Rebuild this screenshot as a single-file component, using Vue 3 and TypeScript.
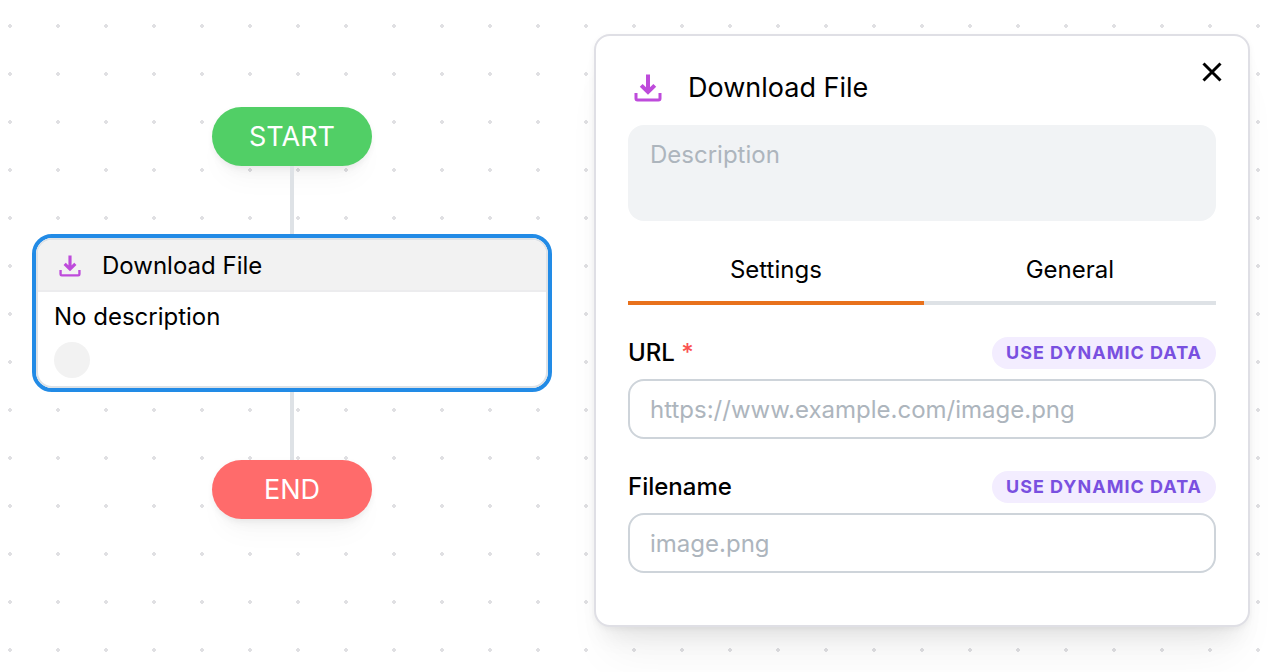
<script setup lang="ts">
import { ref } from 'vue'

type TabId = 'settings' | 'general'

interface Field {
  id: string
  label: string
  placeholder: string
  required: boolean
}

const tabs: { id: TabId; label: string }[] = [
  { id: 'settings', label: 'Settings' },
  { id: 'general', label: 'General' },
]

const fields: Field[] = [
  { id: 'url', label: 'URL', placeholder: 'https://www.example.com/image.png', required: true },
  { id: 'filename', label: 'Filename', placeholder: 'image.png', required: false },
]

const activeTab = ref<TabId>('settings')
const description = ref('')
const values = ref<Record<string, string>>({ url: '', filename: '' })
</script>

<template>
  <main class="canvas">
    <section class="flow" aria-label="Workflow">
      <div class="terminal start">START</div>
      <div class="edge"></div>
      <article class="node">
        <div class="node-inner">
          <header class="node-header">
            <svg class="node-icon" viewBox="0 0 28 28" aria-hidden="true">
              <path class="arrow" d="M14 0.500V18M7.200 11.300 14 18 20.800 11.300" />
              <path class="tray" d="M2 19V24.500Q2 26 3.500 26H24.500Q26 26 26 24.500V19" />
            </svg>
            <span>Download File</span>
          </header>
          <div class="node-body">
            <p>No description</p>
            <span class="dot"></span>
          </div>
        </div>
      </article>
      <div class="edge"></div>
      <div class="terminal end">END</div>
    </section>

    <aside class="panel" aria-label="Action settings">
      <button class="close" type="button" aria-label="Close">
        <svg viewBox="0 0 20 20" aria-hidden="true">
          <path d="M1.500 1.500 18.500 18.500M18.500 1.500 1.500 18.500" />
        </svg>
      </button>
      <header class="panel-header">
        <span class="icon-box">
          <svg class="panel-icon" viewBox="0 0 28 28" aria-hidden="true">
            <path class="arrow" d="M14 0.500V18M7.200 11.300 14 18 20.800 11.300" />
            <path class="tray" d="M2 19V24.500Q2 26 3.500 26H24.500Q26 26 26 24.500V19" />
          </svg>
        </span>
        <h1>Download File</h1>
      </header>
      <textarea v-model="description" class="description" placeholder="Description" aria-label="Description"></textarea>
      <div class="tabs" role="tablist">
        <button
          v-for="tab in tabs"
          :key="tab.id"
          type="button"
          role="tab"
          class="tab"
          :class="{ active: tab.id === activeTab }"
          :aria-selected="tab.id === activeTab"
          @click="activeTab = tab.id"
        >{{ tab.label }}</button>
      </div>
      <form class="fields" @submit.prevent>
        <div v-for="field in fields" :key="field.id" class="field">
          <div class="field-head">
            <label :for="field.id">{{ field.label }}<span v-if="field.required" class="required"> *</span></label>
            <button class="badge" type="button">USE DYNAMIC DATA</button>
          </div>
          <input :id="field.id" v-model="values[field.id]" type="text" :placeholder="field.placeholder" />
        </div>
      </form>
    </aside>
  </main>
</template>

<style>
body {
  margin: 0;
}
</style>

<style scoped>
.canvas,
.canvas * {
  box-sizing: border-box;
}

.canvas {
  display: flex;
  align-items: flex-start;
  gap: 42px;
  min-height: 100vh;
  padding: 34px 30px 44px 32px;
  background-color: #fff;
  background-image: radial-gradient(circle at 10px 26px, #e0e0e3 1px, #e0e0e3 2px, transparent 2px);
  background-size: 48px 48px;
  color: #000;
  font-family: Inter, "Liberation Sans", sans-serif;
  font-size: 24px;
  line-height: 32px;
}

button,
input,
textarea {
  font: inherit;
  color: inherit;
}

.flow {
  display: flex;
  flex: 0 1 520px;
  flex-direction: column;
  align-items: center;
  padding-top: 73px;
}

.terminal {
  width: 160px;
  padding: 14px 0 13px;
  border-radius: 32px;
  color: #fff;
  font-size: 27px;
  text-align: center;
  box-shadow: 0 2px 6px rgba(0, 0, 0, 0.05), 0 20px 30px -10px rgba(0, 0, 0, 0.04), 0 10px 14px -6px rgba(0, 0, 0, 0.04);
}

.start {
  background: #51cf66;
}

.end {
  background: #ff6b6b;
}

.edge {
  width: 4px;
  height: 68px;
  background: #dee2e6;
}

.node {
  width: 100%;
  border: 4px solid #228be6;
  border-radius: 20px;
  background: #fff;
}

.node-inner {
  overflow: hidden;
  border: 2px solid #dee2e6;
  border-radius: 16px;
}

.node-header {
  display: flex;
  align-items: center;
  gap: 21px;
  padding: 10px 21px 8px;
  border-bottom: 2px solid #ececee;
  background: #f2f2f2;
}

svg {
  display: block;
  fill: none;
  stroke: #be4bdb;
  stroke-width: 3;
}

.arrow {
  stroke-width: 4;
}

.tray {
  stroke-width: 3;
}

.node-icon {
  width: 22px;
  height: 22px;
}

.node-body {
  padding: 9px 16px 8px;
}

.node-body p {
  margin: 0 0 9px;
}

.dot {
  display: block;
  width: 36px;
  height: 36px;
  border-radius: 50%;
  background: #f2f2f2;
}

.panel {
  position: relative;
  flex: 1 1 0;
  min-width: 0;
  padding: 32px 32px 52px;
  border: 2px solid #dfdfe5;
  border-radius: 16px;
  background: #fff;
  box-shadow: 0 2px 6px rgba(0, 0, 0, 0.05), 0 40px 46px -14px rgba(0, 0, 0, 0.05), 0 18px 24px -10px rgba(0, 0, 0, 0.08);
}

.close {
  position: absolute;
  top: 20px;
  right: 20px;
  padding: 6px;
  border: 0;
  background: none;
}

.close svg {
  width: 20px;
  height: 20px;
  stroke: #000;
}

.panel-header {
  display: flex;
  align-items: center;
  gap: 20px;
  margin-bottom: 17px;
}

.icon-box {
  display: grid;
  place-items: center;
  width: 40px;
  height: 40px;
}

.panel-icon {
  width: 28px;
  height: 28px;
}

h1 {
  margin: 0;
  font-size: 27px;
  font-weight: 400;
}

.description {
  display: block;
  width: 100%;
  height: 96px;
  padding: 14px 22px;
  border: 0;
  border-radius: 16px;
  background: #f1f3f5;
  resize: none;
}

.description::placeholder,
input::placeholder {
  color: #adb5bd;
  opacity: 1;
}

.tabs {
  display: flex;
  margin: 16px 0 32px;
}

.tab {
  flex: 1 1 auto;
  padding: 17px 32px 15px;
  border: 0;
  border-bottom: 4px solid #dee2e6;
  background: none;
}

.tab.active {
  border-bottom-color: #e8711c;
}

.fields {
  display: grid;
  gap: 32px;
}

.field {
  display: grid;
  gap: 10px;
}

.field-head {
  display: flex;
  align-items: center;
  justify-content: space-between;
}

label {
  font-weight: 500;
}

.required {
  color: #fa5252;
}

.badge {
  padding: 0 14px;
  border: 0;
  border-radius: 16px;
  background: #f3edff;
  color: #7950e0;
  font-size: 18px;
  font-weight: 700;
  letter-spacing: 1px;
}

input {
  width: 100%;
  height: 60px;
  padding: 0 20px;
  border: 2px solid #ced4da;
  border-radius: 16px;
  background: #fff;
}
</style>
